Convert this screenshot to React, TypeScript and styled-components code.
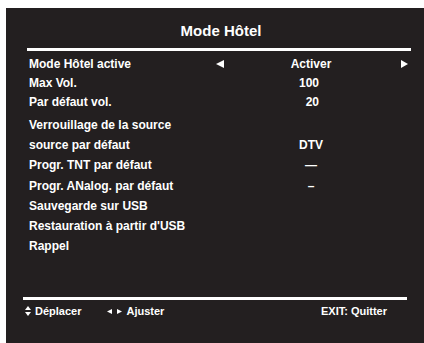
import React, { ReactElement } from 'react'
import styled, { createGlobalStyle } from 'styled-components'

const GlobalStyle = createGlobalStyle`
  html, body {
    margin: 0;
    padding: 0;
    background: #ffffff;
  }
  body {
    font-family: 'Liberation Sans', Arial, sans-serif;
  }
`

const Page = styled.div`
  width: 424px;
  height: 343px;
  padding: 8px 0 0 6px;
  box-sizing: border-box;
  overflow: hidden;
`

const Panel = styled.div`
  width: 418px;
  height: 335px;
  background: #231f20;
  color: #ffffff;
  display: flex;
  flex-direction: column;
  padding: 0 15px 24px 19px;
  box-sizing: border-box;
  font-weight: bold;
`

const Title = styled.div`
  margin-top: 14px;
  height: 17px;
  line-height: 17px;
  font-size: 15px;
  text-align: center;
  padding-left: 8px;
`

const Rule = styled.div<{ $shift?: number }>`
  height: 3px;
  background: #ffffff;
  margin-left: ${p => p.$shift ?? 0}px;
  margin-right: ${p => -(p.$shift ?? 0)}px;
`

const TopRule = styled(Rule)`
  margin-top: 9px;
`

const List = styled.div`
  margin-top: 3px;
  display: flex;
  flex-direction: column;
`

const Group = styled.div<{ $rowHeight: number }>`
  display: grid;
  grid-template-columns: 191px 12px 166px 1fr;
  grid-auto-rows: ${p => p.$rowHeight}px;
  align-items: center;
  font-size: 12px;
  & + & {
    margin-top: 4px;
  }
`

const Label = styled.div`
  padding-left: 4px;
  white-space: nowrap;
`

const Value = styled.div<{ $numeric?: boolean }>`
  text-align: ${p => (p.$numeric ? 'right' : 'center')};
  padding-right: ${p => (p.$numeric ? '75px' : '0')};
`

const ArrowCell = styled.div<{ $side: 'left' | 'right' }>`
  display: flex;
  justify-content: ${p => (p.$side === 'left' ? 'flex-start' : 'flex-end')};
  padding-right: ${p => (p.$side === 'right' ? '1px' : '0')};
  align-items: center;
`

const Spacer = styled.div`
  flex: 1;
`

const Footer = styled.div`
  margin-top: 3px;
  height: 16px;
  display: flex;
  align-items: center;
  font-size: 11px;
`

const Hint = styled.div<{ $gap: number; $offset?: number }>`
  display: flex;
  align-items: center;
  gap: ${p => p.$gap}px;
  margin-left: ${p => p.$offset ?? 0}px;
  white-space: nowrap;
`

const UpDown = styled.div`
  display: flex;
  flex-direction: column;
  gap: 2px;
`

const LeftRight = styled.div`
  display: flex;
  align-items: center;
  gap: 5px;
`

const Exit = styled.div`
  margin-left: auto;
  margin-right: 22px;
`

const Tri = ({ dir, w, h }: { dir: 'left' | 'right' | 'up' | 'down'; w: number; h: number }): ReactElement => {
  const pts = {
    left: `0,${h / 2} ${w},0 ${w},${h}`,
    right: `0,0 ${w},${h / 2} 0,${h}`,
    up: `${w / 2},0 ${w},${h} 0,${h}`,
    down: `0,0 ${w},0 ${w / 2},${h}`,
  }[dir]
  return (
    <svg width={w} height={h} viewBox={`0 0 ${w} ${h}`} style={{ display: 'block' }}>
      <polygon points={pts} fill='#ffffff' />
    </svg>
  )
}

type Row = { label: string; value?: string; numeric?: boolean; arrows?: boolean }

const topRows: Row[] = [
  { label: 'Mode Hôtel active', value: 'Activer', arrows: true },
  { label: 'Max Vol.', value: '100', numeric: true },
  { label: 'Par défaut vol.', value: '20', numeric: true },
]

const lowerRows: Row[] = [
  { label: 'Verrouillage de la source' },
  { label: 'source par défaut', value: 'DTV' },
  { label: 'Progr. TNT par défaut', value: '—' },
  { label: 'Progr. ANalog. par défaut', value: '–' },
  { label: 'Sauvegarde sur USB' },
  { label: "Restauration à partir d'USB" },
  { label: 'Rappel' },
]

const renderRow = (row: Row) => (
  <React.Fragment key={row.label}>
    <Label>{row.label}</Label>
    <ArrowCell $side='left'>{row.arrows && <Tri dir='left' w={8} h={8} />}</ArrowCell>
    <Value $numeric={row.numeric}>{row.value}</Value>
    <ArrowCell $side='right'>{row.arrows && <Tri dir='right' w={7} h={8} />}</ArrowCell>
  </React.Fragment>
)

const App = (): ReactElement => (
  <Page>
    <GlobalStyle />
    <Panel>
      <Title>Mode Hôtel</Title>
      <TopRule $shift={2} />

      <List>
        <Group $rowHeight={19}>{topRows.map(renderRow)}</Group>
        <Group $rowHeight={20.2}>{lowerRows.map(renderRow)}</Group>
      </List>

      <Spacer />
      <Rule $shift={-2} />

      <Footer>
        <Hint $gap={4}>
          <UpDown>
            <Tri dir='up' w={6} h={4} />
            <Tri dir='down' w={6} h={4} />
          </UpDown>
          Déplacer
        </Hint>
        <Hint $gap={4} $offset={26}>
          <LeftRight>
            <Tri dir='left' w={5} h={5} />
            <Tri dir='right' w={5} h={5} />
          </LeftRight>
          Ajuster
        </Hint>
        <Exit>EXIT: Quitter</Exit>
      </Footer>
    </Panel>
  </Page>
)

export default App
